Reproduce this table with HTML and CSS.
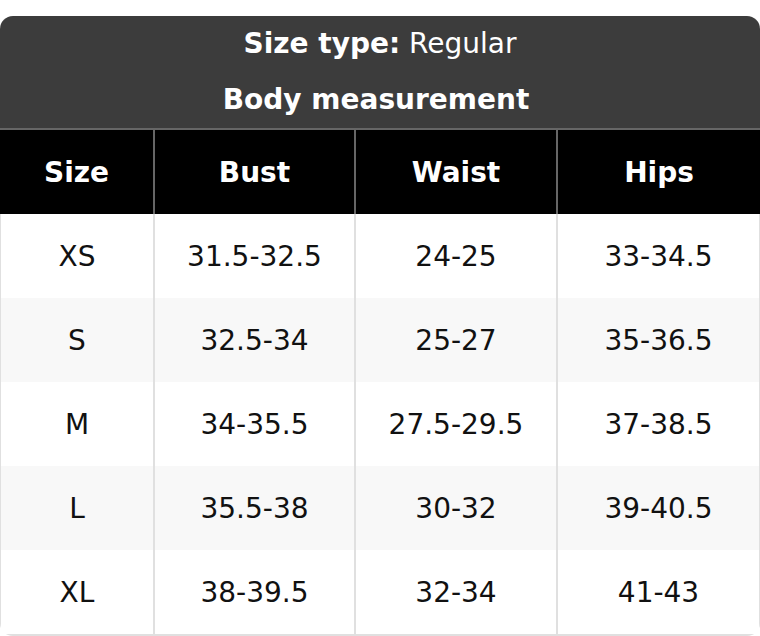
FILE: index.html
```html
<!DOCTYPE html>
<html lang="en">
<head>
<meta charset="utf-8">
<title>Size chart</title>
<link rel="stylesheet" href="styles.css">
</head>
<body>
<div class="chart">
  <div class="title">
    <div class="title-line"><strong>Size type:</strong> Regular</div>
    <div class="title-line sub"><strong>Body measurement</strong></div>
  </div>
  <div class="grid">
    <div class="cell head">Size</div>
    <div class="cell head">Bust</div>
    <div class="cell head">Waist</div>
    <div class="cell head">Hips</div>

    <div class="cell">XS</div>
    <div class="cell">31.5-32.5</div>
    <div class="cell">24-25</div>
    <div class="cell">33-34.5</div>

    <div class="cell alt">S</div>
    <div class="cell alt">32.5-34</div>
    <div class="cell alt">25-27</div>
    <div class="cell alt">35-36.5</div>

    <div class="cell">M</div>
    <div class="cell">34-35.5</div>
    <div class="cell">27.5-29.5</div>
    <div class="cell">37-38.5</div>

    <div class="cell alt">L</div>
    <div class="cell alt">35.5-38</div>
    <div class="cell alt">30-32</div>
    <div class="cell alt">39-40.5</div>

    <div class="cell last">XL</div>
    <div class="cell last">38-39.5</div>
    <div class="cell last">32-34</div>
    <div class="cell last">41-43</div>
  </div>
</div>
</body>
</html>
```
FILE: styles.css
```css
* { box-sizing: border-box; }
html, body { margin: 0; padding: 0; background: #fff; }
body {
  font-family: "DejaVu Sans", "Liberation Sans", sans-serif;
  font-size: 28px;
  color: #111;
  padding-top: 16px;
}
.chart {
  width: 760px;
  border-radius: 13px;
  overflow: hidden;
}
.title {
  background: #3c3c3c;
  color: #fff;
  text-align: center;
}
.title-line {
  height: 56px;
  line-height: 56px;
}
.title-line.sub { padding-right: 8px; }
.title-line strong { font-weight: bold; }
.grid {
  display: grid;
  grid-template-columns: 153px 201px 202px 1fr;
  grid-template-rows: repeat(5, 84px) 86px;
  border-top: 2px solid #666;
}
.cell {
  display: flex;
  align-items: center;
  justify-content: center;
  background: #fff;
  border-left: 2px solid #e0e0e0;
}
.cell:nth-child(4n+1) { border-left: 1px solid #e0e0e0; }
.cell:nth-child(4n) { border-right: 1px solid #e0e0e0; }
.cell.alt { background: #f8f8f8; }
.cell.last { border-bottom: 2px solid #e0e0e0; }
.head {
  background: #000;
  color: #fff;
  font-weight: bold;
  border-left-color: #666;
}
.cell.head:nth-child(4n+1) { border-left: none; }
.cell.head:nth-child(4n) { border-right: none; }
```
